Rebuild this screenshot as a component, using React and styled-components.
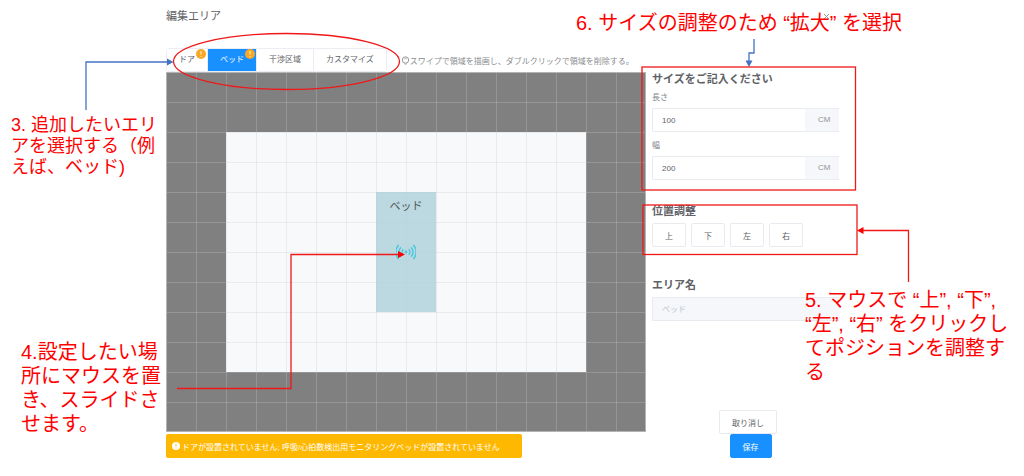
import React, { useState } from "react";
import styled, { createGlobalStyle } from "styled-components";

const TABS = [
  { id: "door", label: "ドア", warn: true },
  { id: "bed", label: "ベッド", warn: true },
  { id: "interference", label: "干渉区域" },
  { id: "custom", label: "カスタマイズ" },
];

const DIRECTIONS = ["上", "下", "左", "右"];

const WarnIcon = ({ size, color, mark }) => (
  <svg width={size} height={size} viewBox="0 0 10 10" aria-hidden="true">
    <circle cx="5" cy="5" r="5" fill={color} />
    <path d="M5 2v3.6M5 6.9v1.2" stroke={mark} strokeWidth="1.1" />
  </svg>
);

const HintIcon = () => (
  <svg width="9" height="9" viewBox="0 0 9 9" fill="none" stroke="#8a8c90">
    <circle cx="4.5" cy="4" r="3.2" strokeWidth="0.9" />
    <path d="M3.4 3.4c0-1.5 2.3-1.4 2.2 0M3.2 7.5l1.3 1 1.3-1" strokeWidth="0.7" />
  </svg>
);

const RadarIcon = () => (
  <svg width="20" height="16" viewBox="0 0 20 16" fill="none" stroke="#4cc9df">
    <circle cx="10" cy="8" r="1.4" fill="#4cc9df" stroke="none" />
    <path
      d="M7.3 5.2a4 4 0 0 0 0 5.6M4.9 3.2a7 7 0 0 0 0 9.6M2.6 1a10.5 10.5 0 0 0 0 14M12.7 5.2a4 4 0 0 1 0 5.6M15.1 3.2a7 7 0 0 1 0 9.6M17.4 1a10.5 10.5 0 0 1 0 14"
      strokeWidth="1.5"
    />
  </svg>
);

// Arrows and frames that the numbered notes point with
const Callouts = () => (
  <CalloutLayer width="1024" height="476" viewBox="0 0 1024 476" fill="none">
    <g stroke="#4472c4" strokeWidth="1.3">
      <path d="M86 110V62H168" />
      <path d="M754 39V53H749V61" />
    </g>
    <path d="M167 58.5L173.5 62L167 65.5ZM745.5 60.5H752.5L749 67Z" fill="#4472c4" />
    <g stroke="#f01818" strokeWidth="1.3">
      <ellipse cx="286.5" cy="61.5" rx="113" ry="28" />
      <rect x="642" y="67" width="213.5" height="123" />
      <rect x="643" y="205" width="214" height="49.5" />
      <path d="M908.5 282V230.5H862" />
      <path d="M177 388.5H291V254.5H399" />
    </g>
    <path d="M863.5 227V234L857 230.5ZM398 251V258L405 254.5Z" fill="#f00" />
  </CalloutLayer>
);

const SizeField = ({ id, label, value, onChange }) => (
  <Field>
    <FieldLabel htmlFor={id}>{label}</FieldLabel>
    <InputGroup>
      <TextInput id={id} value={value} onChange={(e) => onChange(e.target.value)} />
      <Unit>CM</Unit>
    </InputGroup>
  </Field>
);

const App = () => {
  const [active, setActive] = useState("bed");
  const [length, setLength] = useState("100");
  const [width, setWidth] = useState("200");

  return (
    <Page lang="ja">
      <GlobalStyle />
      <Header>
        <Title>編集エリア</Title>
        <CloseButton aria-label="閉じる">
          <svg width="7" height="7" viewBox="0 0 7 7" stroke="#909399">
            <path d="M1 1l5 5M6 1L1 6" />
          </svg>
        </CloseButton>
      </Header>
      <Content>
        <Editor>
          <Toolbar>
            <Tabs>
              {TABS.map((tab) => (
                <Tab
                  key={tab.id}
                  $active={tab.id === active}
                  onClick={() => setActive(tab.id)}
                >
                  {tab.label}
                  {tab.warn && (
                    <Badge>
                      <WarnIcon size={10} color="#f9a825" mark="#fff3d0" />
                    </Badge>
                  )}
                </Tab>
              ))}
            </Tabs>
            <Hint>
              <HintIcon />
              スワイプで領域を描画し、ダブルクリックで領域を削除する。
            </Hint>
          </Toolbar>
          <Canvas>
            <Room />
            <GridLines />
            <Bed>
              ベッド
              <RadarIcon />
            </Bed>
          </Canvas>
          <Alert role="alert">
            <WarnIcon size={8} color="#fff" mark="#ffb800" />
            <span>
              ドアが設置されていません; 呼吸/心拍数検出用モニタリングベッドが設置されていません
            </span>
          </Alert>
        </Editor>
        <Panel>
          <SizeSection>
            <Heading>サイズをご記入ください</Heading>
            <Fields>
              <SizeField id="length" label="長さ" value={length} onChange={setLength} />
              <SizeField id="width" label="幅" value={width} onChange={setWidth} />
            </Fields>
          </SizeSection>
          <PositionSection>
            <Heading>位置調整</Heading>
            <Directions>
              {DIRECTIONS.map((direction) => (
                <Button key={direction}>{direction}</Button>
              ))}
            </Directions>
          </PositionSection>
          <section>
            <Heading as="label" htmlFor="area-name">
              エリア名
            </Heading>
            <InputGroup>
              <TextInput id="area-name" placeholder="ベッド" disabled />
            </InputGroup>
          </section>
          <Footer>
            <Button>取り消し</Button>
            <SaveButton>保存</SaveButton>
          </Footer>
        </Panel>
      </Content>

      <SmallNote $x={11} $y={115}>
        3. 追加したいエリ
        <br />
        アを選択する（例
        <br />
        えば、ベッド)
      </SmallNote>
      <Note $x={21} $y={340}>
        4.設定したい場
        <br />
        所にマウスを置
        <br />
        き、スライドさ
        <br />
        せます。
      </Note>
      <Note $x={805} $y={288}>
        5. マウスで “上”, “下”,
        <br />
        “左”, “右” をクリックし
        <br />
        てポジションを調整す
        <br />る
      </Note>
      <Note $x={576} $y={11}>
        6. サイズの調整のため “拡大” を選択
      </Note>
      <Callouts />
    </Page>
  );
};

const GlobalStyle = createGlobalStyle`
  * {
    box-sizing: border-box;
  }
  body {
    margin: 0;
    background: #fff;
  }
  body, button, input {
    font-family: "Liberation Sans", "Noto Sans CJK JP", sans-serif;
  }
`;

const Page = styled.div`
  position: relative;
  padding: 8px 16px 18px 166px;
  color: #606266;
  font-size: 8px;
`;

const Header = styled.header`
  display: flex;
  align-items: center;
  justify-content: space-between;
  max-width: 664px;
  height: 16px;
`;

const Title = styled.h1`
  margin: 0;
  font-size: 11px;
  font-weight: 400;
  line-height: 16px;
`;

const CloseButton = styled.button`
  display: flex;
  padding: 0;
  border: 0;
  background: none;
`;

const Content = styled.main`
  display: grid;
  grid-template-columns: 480px minmax(0, 187px);
  column-gap: 6px;
  padding-top: 24px;
`;

const Editor = styled.div`
  display: flex;
  flex-direction: column;
  align-items: flex-start;
`;

const Toolbar = styled.div`
  display: flex;
  align-items: center;
  gap: 14px;
  height: 24px;
  white-space: nowrap;
`;

const Tabs = styled.div`
  display: flex;
  border: 1px solid #ebedf2;
  border-radius: 3px;
`;

const Tab = styled.button`
  position: relative;
  height: 22px;
  padding: 0 12px;
  border: 0;
  border-right: 1px solid #ebedf2;
  background: ${(props) => (props.$active ? "#1890ff" : "#fff")};
  color: ${(props) => (props.$active ? "#fff" : "#606266")};
  font-size: 8px;
  line-height: 20px;

  &:last-child {
    border-right: 0;
  }
`;

const Badge = styled.span`
  position: absolute;
  top: 0;
  right: 1px;
  display: flex;
`;

const Hint = styled.span`
  display: flex;
  align-items: center;
  color: #8a8c90;
`;

const Canvas = styled.div`
  position: relative;
  width: 100%;
  height: 360px;
  padding: 60px;
  background: #808080;
`;

const Room = styled.div`
  height: 240px;
  background: #f8f9fb;
`;

const GridLines = styled.div`
  position: absolute;
  inset: 0;
  border: 1px solid #b4b4b4;
  background-image:
    linear-gradient(to right, rgba(200, 200, 200, 0.3) 1px, transparent 1px),
    linear-gradient(to bottom, rgba(200, 200, 200, 0.3) 1px, transparent 1px);
  background-size: 30px 30px;
  background-origin: border-box;
`;

const Bed = styled.div`
  position: absolute;
  top: 120px;
  left: 210px;
  display: flex;
  flex-direction: column;
  align-items: center;
  gap: 30px;
  width: 60px;
  height: 120px;
  padding-top: 6px;
  background: rgba(173, 208, 217, 0.8);
  color: #505558;
  font-size: 11px;
  line-height: 16px;
`;

const Alert = styled.div`
  display: flex;
  align-items: center;
  gap: 2px;
  min-width: 356px;
  height: 24px;
  margin-top: 2px;
  padding: 0 6px;
  border-radius: 2px;
  background: #ffb800;
  color: #fff;
  white-space: nowrap;
`;

const Panel = styled.aside`
  display: flex;
  flex-direction: column;
  padding-top: 21px;
`;

const SizeSection = styled.section`
  margin-bottom: 21px;
`;

const PositionSection = styled.section`
  margin-bottom: 28px;
`;

const Heading = styled.h2`
  display: block;
  margin: 0 0 2px;
  font-size: 11px;
  font-weight: 700;
  line-height: 20px;
`;

const Fields = styled.div`
  display: grid;
  gap: 7px;
`;

const Field = styled.div`
  display: grid;
  gap: 3px;
`;

const FieldLabel = styled.label`
  color: #808388;
  line-height: 14px;
`;

const InputGroup = styled.div`
  display: flex;
  height: 24px;
`;

const TextInput = styled.input`
  flex: 1;
  min-width: 0;
  padding: 0 9px;
  border: 1px solid #e8eaef;
  border-right: 0;
  border-radius: 2px 0 0 2px;
  background: #fff;
  color: #606266;
  font-size: 8px;

  &:disabled {
    background: #f5f7fa;
  }
  &::placeholder {
    color: #c0c4cc;
  }
`;

const Unit = styled.span`
  width: 34px;
  border-top: 1px solid #ebeef5;
  border-bottom: 1px solid #ebeef5;
  background: #f5f7fa;
  color: #909399;
  line-height: 22px;
  padding-left: 13px;
`;

const Directions = styled.div`
  display: flex;
  gap: 5px;
`;

const Button = styled.button`
  height: 24px;
  padding: 0 12px;
  border: 1px solid #e8eaef;
  border-radius: 2px;
  background: #fff;
  color: #606266;
  font-size: 8px;
`;

const SaveButton = styled(Button)`
  margin-left: 5px;
  border-color: #1890ff;
  background: #1890ff;
  color: #fff;
`;

const Footer = styled.footer`
  display: flex;
  flex-direction: column;
  align-items: center;
  margin-top: auto;
  padding-left: 5px;
`;

const CalloutLayer = styled.svg`
  position: absolute;
  top: 0;
  left: 0;
  pointer-events: none;
`;

const Note = styled.p`
  position: absolute;
  top: ${(props) => props.$y}px;
  left: ${(props) => props.$x}px;
  margin: 0;
  color: #f00;
  font-size: 20px;
  line-height: 24px;
  white-space: nowrap;
`;

const SmallNote = styled(Note)`
  font-size: 18px;
  line-height: 21px;
`;

export default App;
